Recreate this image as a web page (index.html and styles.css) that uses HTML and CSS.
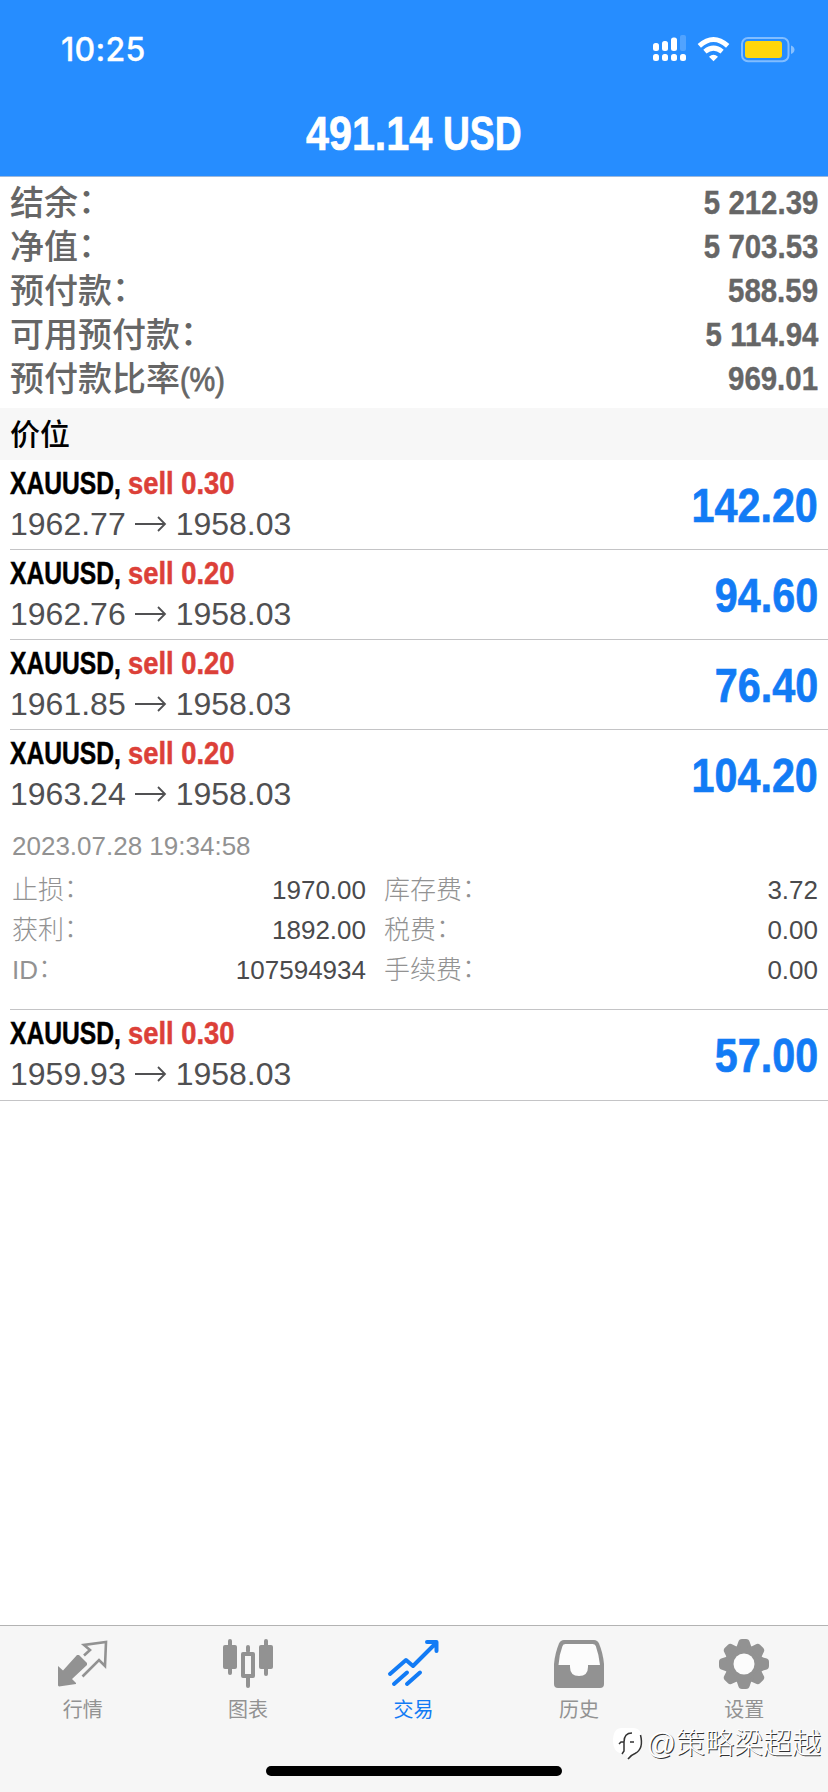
FILE: index.html
```html
<!DOCTYPE html>
<html lang="zh-CN">
<head>
<meta charset="utf-8">
<title>交易</title>
<link rel="stylesheet" href="styles.css">
</head>
<body>
<div class="screen">
  <header class="header">
    <div class="status">
      <span class="time">10:25</span>
      <svg class="status-icons" viewBox="650 30 150 40" width="150" height="40">
        <g fill="#fff">
          <rect x="653" y="43" width="6" height="8" rx="2.5"/><rect x="662" y="41" width="6" height="10" rx="2.5"/><rect x="671" y="37.500" width="6" height="13.500" rx="2.500"/>
          <rect x="680" y="35" width="6" height="16" rx="2" opacity=".2"/>
          <rect x="653" y="54" width="6" height="7" rx="2.5"/><rect x="662" y="54" width="6" height="7" rx="2.5"/><rect x="671" y="54" width="6" height="7" rx="2.5"/><rect x="680" y="54" width="6" height="7" rx="2.5"/>
          <path d="M713.500 61.200L709 56.700Q713.500 52.800 718 56.700Z"/>
        </g>
        <g fill="none" stroke="#fff" stroke-width="5"><path d="M699.300 45.800Q713.500 33.200 727.700 45.800"/><path d="M704.900 51.600Q713.500 44.600 722.100 51.600"/></g>
        <rect x="742" y="38" width="46.500" height="23.300" rx="6" fill="none" stroke="#fff" stroke-opacity=".42" stroke-width="2"/>
        <path d="M791 45.500Q794.500 47 794.500 49.700T791 54Z" fill="#fff" opacity=".45"/>
        <rect x="745" y="41" width="37" height="17" rx="3" fill="#ffd60a"/>
      </svg>
    </div>
    <h1 class="total"><span class="amount">491.14</span> <span class="currency">USD</span></h1>
  </header>

  <section class="summary">
    <div class="sum-row"><span>结余<i>：</i></span><b>5 212.39</b></div>
    <div class="sum-row"><span>净值<i>：</i></span><b>5 703.53</b></div>
    <div class="sum-row"><span>预付款<i>：</i></span><b>588.59</b></div>
    <div class="sum-row"><span>可用预付款<i>：</i></span><b>5 114.94</b></div>
    <div class="sum-row"><span>预付款比率<em>(%)</em></span><b>969.01</b></div>
  </section>

  <h2 class="section">价位</h2>

  <main class="positions">
    <article class="position"><div class="deal"><div class="name"><b class="symbol">XAUUSD,</b><b class="side">sell 0.30</b></div><div class="prices"><span>1962.77</span><svg class="arrow" viewBox="0 0 32 18"><path d="M0 9H30M23 2L30 9L23 16"/></svg><span>1958.03</span></div></div><b class="profit">142.20</b></article>
    <article class="position"><div class="deal"><div class="name"><b class="symbol">XAUUSD,</b><b class="side">sell 0.20</b></div><div class="prices"><span>1962.76</span><svg class="arrow" viewBox="0 0 32 18"><path d="M0 9H30M23 2L30 9L23 16"/></svg><span>1958.03</span></div></div><b class="profit">94.60</b></article>
    <article class="position"><div class="deal"><div class="name"><b class="symbol">XAUUSD,</b><b class="side">sell 0.20</b></div><div class="prices"><span>1961.85</span><svg class="arrow" viewBox="0 0 32 18"><path d="M0 9H30M23 2L30 9L23 16"/></svg><span>1958.03</span></div></div><b class="profit">76.40</b></article>
    <article class="position open"><div class="deal"><div class="name"><b class="symbol">XAUUSD,</b><b class="side">sell 0.20</b></div><div class="prices"><span>1963.24</span><svg class="arrow" viewBox="0 0 32 18"><path d="M0 9H30M23 2L30 9L23 16"/></svg><span>1958.03</span></div></div><b class="profit">104.20</b></article>
    <div class="details">
      <time class="opened">2023.07.28 19:34:58</time>
      <dl class="grid">
        <dt>止损<i>：</i></dt><dd>1970.00</dd><dt>库存费<i>：</i></dt><dd>3.72</dd>
        <dt>获利<i>：</i></dt><dd>1892.00</dd><dt>税费<i>：</i></dt><dd>0.00</dd>
        <dt>ID<i>：</i></dt><dd>107594934</dd><dt>手续费<i>：</i></dt><dd>0.00</dd>
      </dl>
    </div>
    <article class="position last"><div class="deal"><div class="name"><b class="symbol">XAUUSD,</b><b class="side">sell 0.30</b></div><div class="prices"><span>1959.93</span><svg class="arrow" viewBox="0 0 32 18"><path d="M0 9H30M23 2L30 9L23 16"/></svg><span>1958.03</span></div></div><b class="profit">57.00</b></article>
  </main>

  <footer class="footer">
    <nav class="tabs">
      <a class="tab"><svg viewBox="0 0 52 52"><path fill="currentColor" d="M1 28L6 32.500L20 17L22 17L30 25L30 27L15 41L19 45V46L2 48.500L1 47.500Z"/><path fill="none" stroke="currentColor" stroke-width="2.600" d="M27 17.500L33 12L27 7L49 4L48 28L42 22L25.500 38.500"/></svg><span>行情</span></a>
      <a class="tab"><svg viewBox="0 0 52 52"><g fill="currentColor"><rect x="1" y="7" width="14" height="24" rx="2"/><rect x="6" y="1" width="4" height="36" rx="2"/><rect x="37" y="7" width="14" height="24" rx="2"/><rect x="42" y="1" width="4" height="37" rx="2"/><rect x="24" y="7" width="4" height="8" rx="2"/><rect x="24" y="38" width="4" height="12" rx="2"/><path fill-rule="evenodd" d="M21 14H31Q33 14 33 16V38Q33 40 31 40H21Q19 40 19 38V16Q19 14 21 14ZM23 18V36H29V18Z"/></g></svg><span>图表</span></a>
      <a class="tab active"><svg viewBox="0 0 52 52"><g fill="none" stroke="currentColor" stroke-width="4" stroke-linecap="round" stroke-linejoin="round"><path d="M3 36L19 22L26 28L49 5M40 4H49.500V13M7 46L20 34.500M20 46L33 34.500"/></g></svg><span>交易</span></a>
      <a class="tab"><svg viewBox="0 0 52 52"><path fill="currentColor" d="M11 2H41Q44.500 2 46 5.500Q50 15 51 26V46Q51 50 47 50H5Q1 50 1 46V26Q2 15 6 5.500Q7.500 2 11 2Z"/><path fill="#fcfcfc" d="M12.500 6H39.500Q42 6 42.800 8Q46 17 47 27H35V29Q35 38 26 38T17 29V27H5.500Q6 17 9.500 8Q10 6 12.500 6Z"/></svg><span>历史</span></a>
      <a class="tab"><svg viewBox="0 0 52 52"><g fill="currentColor"><circle cx="26" cy="26" r="18.500"/><g id="teeth"><path id="tooth" d="M16.500 11.500Q19.300 8.500 20.300 4Q21 1 24 1H28Q31 1 31.700 4Q32.700 8.500 35.500 11.500Z"/><use href="#tooth" transform="rotate(45 26 26)"/><use href="#tooth" transform="rotate(90 26 26)"/><use href="#tooth" transform="rotate(135 26 26)"/></g><use href="#teeth" transform="rotate(180 26 26)"/></g><circle cx="26" cy="26" r="10.500" fill="#fcfcfc"/></svg><span>设置</span></a>
    </nav>
    <div class="home-bar"></div>
    <div class="watermark">
      <svg viewBox="0 0 32 34" width="32" height="34"><path fill="#fff" d="M9 1H20Q29 1 29 13Q29 26 20 28L15 32L13 27H9Q0 25 0 14Q0 1 9 1Z"/><path fill="none" stroke="#333" stroke-width="1.500" d="M6 17L8 15H11V24L9 27M11 15Q11 6 19 6M17 15H21M27.500 8Q31 22 22 26.500Q18 28 15 32"/></svg>
      <span>@策略梁超越</span>
    </div>
  </footer>
</div>
</body>
</html>
```
FILE: styles.css
```css
* { box-sizing: border-box; }
body { margin: 0; background: #fff; font-family: "Liberation Sans", "Noto Sans CJK SC", sans-serif; }
h1, h2, dl, dd { margin: 0; }
i, em { font-style: normal; }
.screen { width: 828px; height: 1792px; display: flex; flex-direction: column; overflow: hidden; }

.header { height: 177px; background: #268dff; border-bottom: 1px solid #9cb8dc; color: #fff; }
.status { height: 100px; padding: 30px 28px 0 61px; display: flex; justify-content: space-between; }
.time { font: 500 32px/40px Inter, sans-serif; letter-spacing: .3px; -webkit-text-stroke: .3px; }
.status-icons { display: block; }
.total { display: flex; justify-content: center; gap: 11px; font-size: 48px; line-height: 67px; white-space: nowrap; -webkit-text-stroke: .7px; }
.amount { width: 126px; transform: scaleX(.86); transform-origin: left; }
.currency { width: 79px; transform: scaleX(.775); transform-origin: left; }

.summary { height: 231px; padding: 4px 10px 0 10px; color: #666; }
.sum-row { height: 44px; display: flex; justify-content: space-between; align-items: center; line-height: 44px; font-size: 34px; font-weight: 500; white-space: nowrap; }
.sum-row i, .details i { display: inline-block; width: 1em; transform: translateY(-2px); }
.sum-row em { display: inline-block; font-weight: 400; transform: scaleX(.85); transform-origin: left; -webkit-text-stroke: .8px; }
.sum-row b { transform: translateY(-1px) scaleX(.865); transform-origin: right; -webkit-text-stroke: .4px; }

.section { height: 52px; padding-left: 10px; background: #f7f7f7; color: #000; font-size: 30px; font-weight: 500; line-height: 54px; }

.positions { flex: 1; }
.position { height: 90px; margin-left: 10px; padding-right: 10px; border-bottom: 1px solid #c4c4c6; display: flex; justify-content: space-between; align-items: flex-start; white-space: nowrap; }
.position.open { border-bottom-color: transparent; }
.position.last { height: 91px; margin-left: 0; padding-left: 10px; }
.deal { height: 89px; padding-top: 3px; }
.name { height: 40px; display: flex; font-size: 32px; line-height: 40px; -webkit-text-stroke: .5px; }
.symbol { width: 118px; color: #000; transform: scaleX(.77); transform-origin: left; }
.side { color: #dc4038; transform: scaleX(.855); transform-origin: left; }
.prices { height: 42px; display: flex; align-items: center; font-size: 32px; line-height: 42px; color: #505052; }
.arrow { width: 32px; height: 18px; margin: 0 9px; fill: none; stroke: #505052; stroke-width: 1.8; }
.profit { font-size: 48px; line-height: 92px; height: 89px; color: #127bf5; transform: scaleX(.86); transform-origin: right; -webkit-text-stroke: .7px; }

.details { height: 190px; margin-left: 10px; padding: 6px 10px 0 2px; border-bottom: 1px solid #c4c4c6; font-size: 26px; font-weight: 300; color: #929292; }
.opened { display: block; height: 44px; line-height: 40px; }
.grid { display: grid; grid-template-columns: 110px 244px 120px 1fr; grid-auto-rows: 40px; line-height: 40px; white-space: nowrap; }
.grid dd { text-align: right; color: #4a4a4c; font-weight: 400; }
.grid dt:nth-of-type(even) { padding-left: 18px; }

.footer { position: relative; height: 167px; border-top: 1px solid #b3b3b3; background: #f6f6f6; }
.tabs { display: grid; grid-template-columns: repeat(5, 1fr); height: 140px; padding: 12px 1px 0 0; }
.tab { display: flex; flex-direction: column; align-items: center; color: #929292; font-size: 20px; line-height: 28px; }
.tab svg { width: 52px; height: 52px; margin-bottom: 6px; }
.tab.active { color: #127bf5; }
.home-bar { width: 296px; height: 10px; margin: 0 auto; border-radius: 5px; background: #000; }
.watermark { position: absolute; right: 7px; bottom: 28px; display: flex; align-items: center; gap: 2px; color: #fff; font-size: 29px; font-weight: 300; line-height: 40px; text-shadow: 1px 1px 0 #333; white-space: nowrap; }
```
